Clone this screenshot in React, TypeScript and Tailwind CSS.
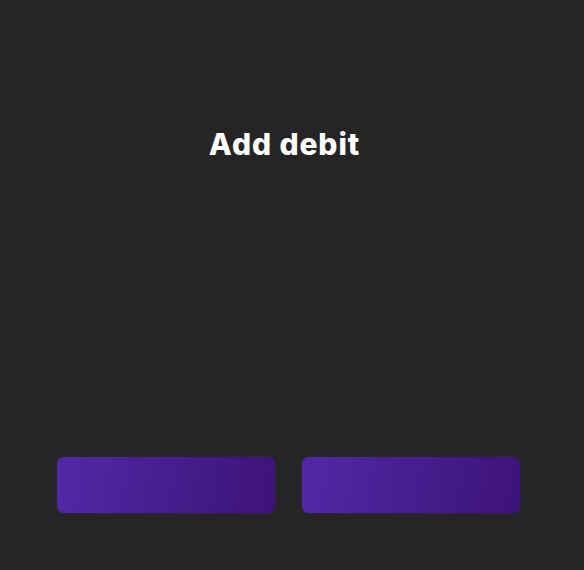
export default function App() {
  return (
    <div className="min-h-[570px] w-full bg-[#252525] font-['Inter',sans-serif]">
      <div className="pl-[57px] pr-[64px]">
        <h1 className="pt-[124px] text-center text-[30px] font-extrabold leading-[40px] tracking-[0.9px] text-white pr-[8px]">
          Add debit
        </h1>
        <div className="mt-[293px] flex gap-[27px]">
          <button className="h-[56px] flex-1 rounded-[7px] bg-[linear-gradient(100deg,#5129a6,#3c1377)] shadow-[0_0_3px_rgba(80,40,160,0.45)]" />
          <button className="h-[56px] flex-1 rounded-[7px] bg-[linear-gradient(100deg,#5129a6,#3c1377)] shadow-[0_0_3px_rgba(80,40,160,0.45)]" />
        </div>
      </div>
    </div>
  );
}
